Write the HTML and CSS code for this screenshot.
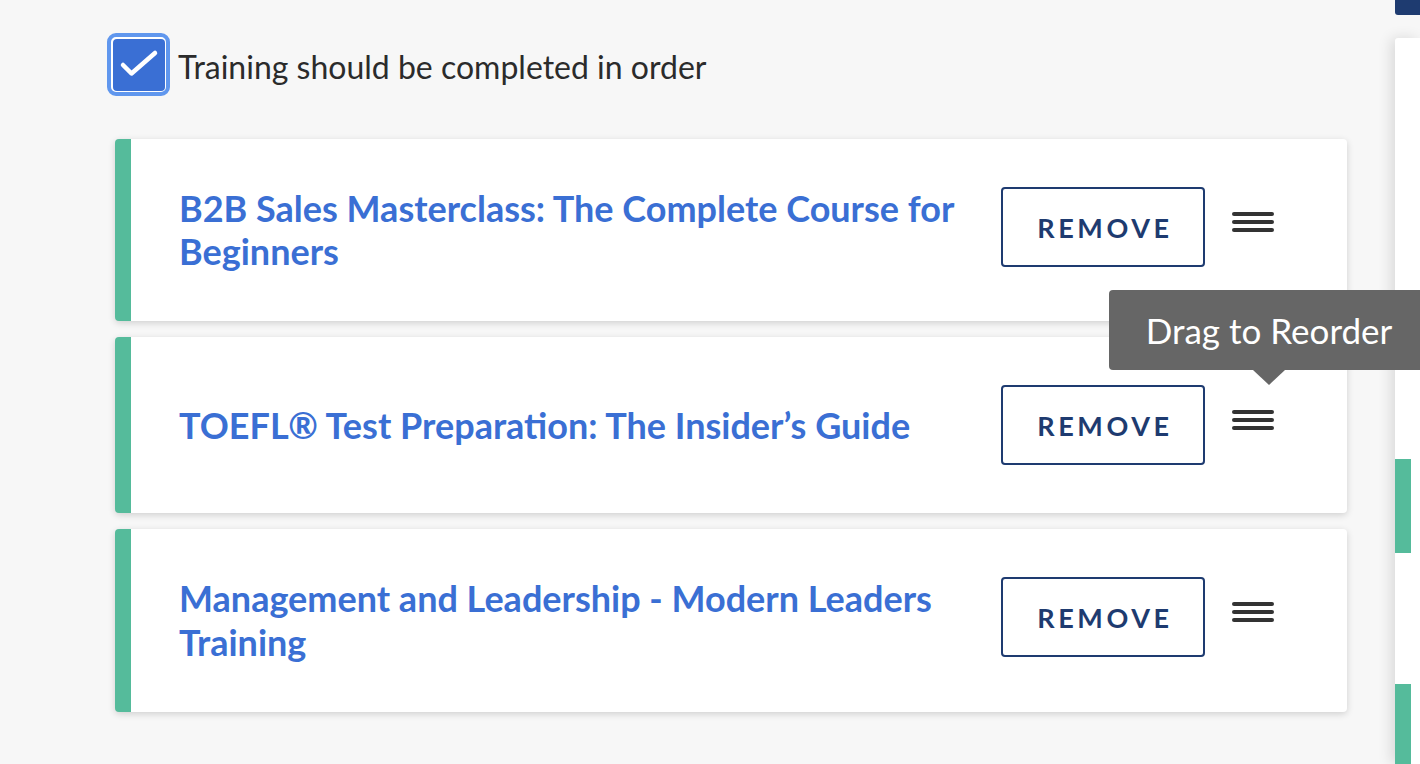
FILE: index.html
```html
<!DOCTYPE html>
<html>
<head>
<meta charset="utf-8">
<link rel="stylesheet" href="styles.css">
</head>
<body>
<div class="page">
  <main class="main">
    <label class="order-check">
      <span class="check-ring">
        <span class="check-box">
          <svg width="52" height="52" viewBox="0 0 52 52"><path d="M10 26 L18.5 34.5 L42 14" fill="none" stroke="#fff" stroke-width="4.5" stroke-linecap="round" stroke-linejoin="round"/></svg>
        </span>
      </span>
      <span class="check-label">Training should be completed in order</span>
    </label>

    <ul class="course-list">
      <li class="course-card">
        <div class="course-title-wrap"><a class="course-title">B2B Sales Masterclass: The Complete Course for Beginners</a></div>
        <button class="remove-btn">REMOVE</button>
        <span class="handle">
          <svg width="42" height="22" viewBox="0 0 42 22"><g stroke="#333" stroke-width="4" stroke-linecap="round"><line x1="2" y1="3" x2="40" y2="3"/><line x1="2" y1="11" x2="40" y2="11"/><line x1="2" y1="19" x2="40" y2="19"/></g></svg>
        </span>
      </li>
      <li class="course-card">
        <div class="course-title-wrap"><a class="course-title">TOEFL® Test Preparation: The Insider’s Guide</a></div>
        <button class="remove-btn">REMOVE</button>
        <span class="handle">
          <svg width="42" height="22" viewBox="0 0 42 22"><g stroke="#333" stroke-width="4" stroke-linecap="round"><line x1="2" y1="3" x2="40" y2="3"/><line x1="2" y1="11" x2="40" y2="11"/><line x1="2" y1="19" x2="40" y2="19"/></g></svg>
          <span class="tooltip">Drag to Reorder</span>
        </span>
      </li>
      <li class="course-card">
        <div class="course-title-wrap"><a class="course-title">Management and Leadership - Modern Leaders Training</a></div>
        <button class="remove-btn">REMOVE</button>
        <span class="handle">
          <svg width="42" height="22" viewBox="0 0 42 22"><g stroke="#333" stroke-width="4" stroke-linecap="round"><line x1="2" y1="3" x2="40" y2="3"/><line x1="2" y1="11" x2="40" y2="11"/><line x1="2" y1="19" x2="40" y2="19"/></g></svg>
        </span>
      </li>
    </ul>
  </main>

  <aside class="side">
    <div class="side-top"></div>
    <div class="side-panel">
      <div class="side-bar"></div>
      <div class="side-bar side-bar-last"></div>
    </div>
  </aside>
</div>
</body>
</html>
```

FILE: styles.css
```css
html, body {
  margin: 0;
  padding: 0;
  height: 100%;
  overflow: hidden;
}
body {
  background: #f7f7f7;
  font-family: Lato, "Open Sans", "Liberation Sans", sans-serif;
  color: #2b2b2b;
}
.page {
  display: flex;
  height: 764px;
}
.main {
  flex: 1;
  padding: 33px 48px 0 115px;
}
.order-check {
  display: flex;
  align-items: center;
  margin-left: -8px;
  gap: 8px;
}
.check-ring {
  width: 55px;
  height: 55px;
  border: 4px solid #6097ee;
  border-radius: 9px;
  display: flex;
  align-items: center;
  justify-content: center;
  background: #fff;
}
.check-box {
  width: 52px;
  height: 52px;
  border-radius: 4px;
  background: #3a6fd4;
  display: block;
}
.check-box svg { display: block; }
.check-label {
  font-size: 32px;
  color: #2b2b2b;
  line-height: 1;
  padding-top: 4px;
}
.course-list {
  list-style: none;
  margin: 43px 0 0;
  padding: 0;
  display: flex;
  flex-direction: column;
  gap: 16px;
}
.course-card {
  display: flex;
  align-items: flex-start;
  background: #fff;
  border-left: 16px solid #55bb9b;
  border-radius: 4px;
  box-shadow: 0 2px 7px rgba(0,0,0,0.16);
  padding: 48px 73px 48px 48px;
}
.course-title-wrap {
  flex: 1;
  min-height: 80px;
  display: flex;
  align-items: center;
  padding-right: 40px;
}
.course-title {
  font-size: 36px;
  font-weight: 700;
  color: #3a6fd4;
  line-height: 1.2;
}
.remove-btn {
  width: 204px;
  height: 80px;
  border: 2px solid #1e3b70;
  border-radius: 4px;
  background: #fff;
  color: #1e3b70;
  font-family: Lato, "Open Sans", sans-serif;
  font-weight: 700;
  font-size: 27px;
  letter-spacing: 3.6px;
  padding: 0 0 0 4px;
  flex-shrink: 0;
}
.handle {
  position: relative;
  margin-left: 27px;
  margin-top: 24px;
  display: block;
  width: 42px;
  height: 22px;
}
.handle svg { display: block; }
.tooltip {
  position: absolute;
  left: 37px;
  bottom: 61px;
  transform: translateX(-50%);
  width: 320px;
  height: 80px;
  background: #666;
  color: #fff;
  border-radius: 4px;
  font-size: 35px;
  display: flex;
  align-items: center;
  justify-content: center;
  white-space: nowrap;
}
.tooltip::after {
  content: "";
  position: absolute;
  left: 50%;
  top: 100%;
  margin-left: -16px;
  border-left: 16px solid transparent;
  border-right: 16px solid transparent;
  border-top: 15px solid #666;
}
.side {
  width: 25px;
  flex-shrink: 0;
  display: flex;
  flex-direction: column;
}
.side-top {
  height: 15px;
  flex-shrink: 0;
  background: #1e3b70;
  border-bottom-left-radius: 3px;
  margin-bottom: 23px;
}
.side-panel {
  flex: 1;
  min-height: 0;
  overflow: hidden;
  background: #fff;
  border-top-left-radius: 3px;
  box-shadow: -4px 0 14px rgba(0,0,0,0.12);
  padding-top: 421px;
}
.side-bar {
  width: 16px;
  height: 94px;
  background: #55bb9b;
}
.side-bar-last {
  margin-top: 131px;
  height: 120px;
}
```
